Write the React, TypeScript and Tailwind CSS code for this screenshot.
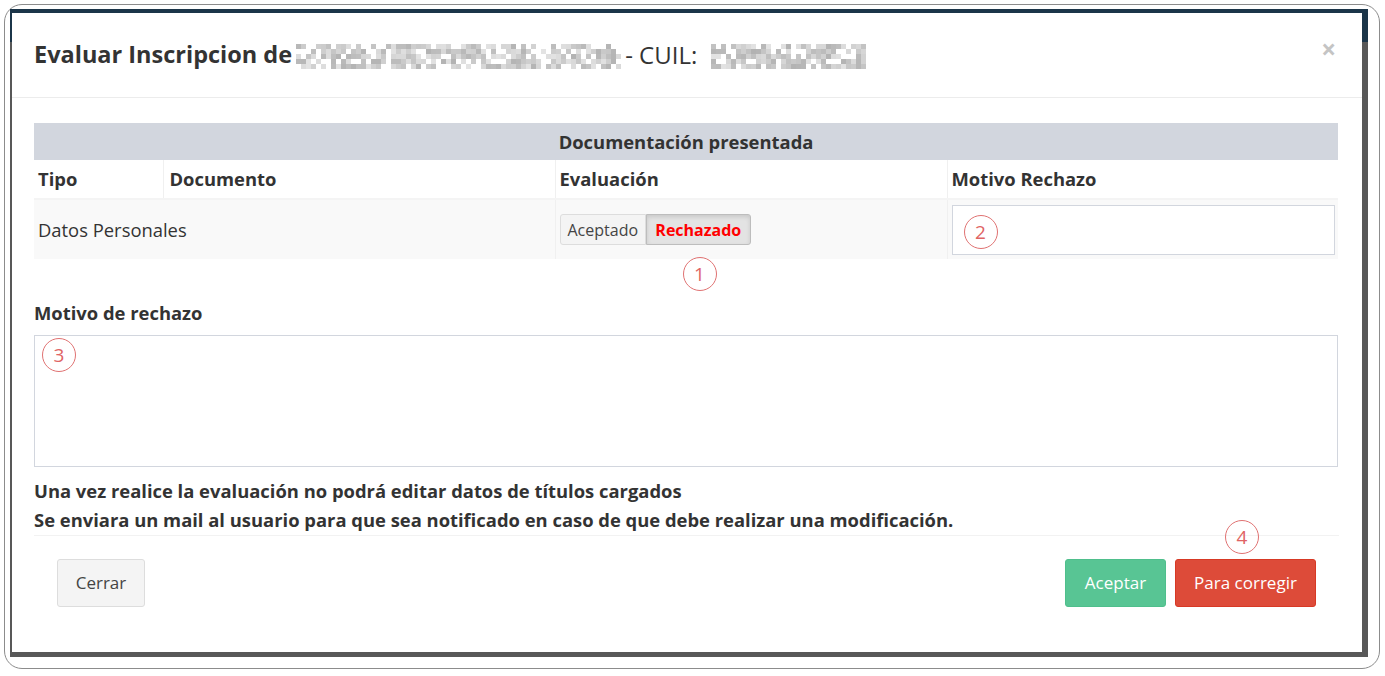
import React from 'react';

// pixelated placeholder used for the censored name / CUIL
const Blur = ({ cols, seed }: { cols: number; seed: number }) => {
  const rows = 7;
  const cell = 5;
  const cells: React.ReactNode[] = [];
  let s = seed;
  const rnd = () => {
    s = (s * 9301 + 49297) % 233280;
    return s / 233280;
  };
  for (let c = 0; c < cols; c++) {
    for (let r = 0; r < rows; r++) {
      const edge = r === 0 || r === rows - 1 ? 0.3 : 1;
      const v = rnd() * edge;
      if (v < 0.3) continue;
      const g = Math.round(248 - v * 70);
      cells.push(
        <rect key={`${c}-${r}`} x={c * cell} y={r * cell} width={cell} height={cell} fill={`rgb(${g},${g},${g})`} />
      );
    }
  }
  return (
    <svg width={cols * cell} height={rows * cell} className="inline-block align-middle">
      {cells}
    </svg>
  );
};

const Mark = ({ n, className }: { n: number; className: string }) => (
  <span
    className={`absolute flex h-[34px] w-[34px] items-center justify-center rounded-full border-[1.5px] border-[#e07272] text-[19px] text-[#e06464] ${className}`}
  >
    {n}
  </span>
);

export default function App() {
  return (
    <div
      className="h-[676px] w-[1385px] bg-white pl-[4px] pt-[4px] text-[#333]"
      style={{ fontFamily: '"Open Sans", Lato, sans-serif' }}
    >
      <div className="flex h-[665px] w-[1376px] flex-col rounded-[18px] border border-[#8c8c8c] pb-[11px] pl-[5px] pr-[11px] pt-[4px]">
        <div className="flex flex-1 flex-col bg-[linear-gradient(to_bottom,#1b3549_0,#1b3549_33px,#585858_33px)] pb-[5px] pl-[2px] pr-[6px] pt-[4px]">
          <div className="flex flex-1 flex-col bg-white">
            {/* header */}
            <div className="flex h-[85px] items-center justify-between border-b border-[#ececec] pl-[22px] pr-[26px]">
              <h4 className="flex items-center text-[23.5px] font-bold">
                Evaluar Inscripcion de
                <span className="ml-[4px]">
                  <Blur cols={65} seed={17} />
                </span>
                <span className="ml-[4px] text-[24px] font-normal">- CUIL:</span>
                <span className="ml-[14px]">
                  <Blur cols={31} seed={91} />
                </span>
              </h4>
              <span className="mb-[12px] text-[26px] font-bold leading-none text-[#c4c4c4]">×</span>
            </div>

            {/* body */}
            <div className="flex flex-col px-[22px] pt-[25px] pr-[24px]">
              <table className="w-full border-collapse text-[18.4px]">
                <thead>
                  <tr>
                    <th colSpan={4} className="h-[37px] bg-[#d2d6de] text-center font-bold">
                      Documentación presentada
                    </th>
                  </tr>
                  <tr className="h-[39px] border-b-2 border-[#f4f4f4] text-left">
                    <th className="w-[129px] border-r border-[#f0f0f0] pl-[4px] font-bold">Tipo</th>
                    <th className="w-[392px] border-r border-[#f0f0f0] pl-[6px] font-bold">Documento</th>
                    <th className="w-[392px] border-r border-[#f0f0f0] pl-[4px] font-bold">Evaluación</th>
                    <th className="pl-[4px] font-bold">Motivo Rechazo</th>
                  </tr>
                </thead>
                <tbody>
                  <tr className="h-[60px] bg-[#f9f9f9]">
                    <td colSpan={2} className="border-r border-[#f0f0f0] pl-[4px]">
                      Datos Personales
                    </td>
                    <td className="relative border-r border-[#f0f0f0] pl-[4px]">
                      <div className="flex h-[31px] w-[191px] text-[16px]">
                        <span className="flex items-center rounded-l-[3px] border border-[#ddd] bg-[#f4f4f4] px-[7px] text-[#444]">
                          Aceptado
                        </span>
                        <span className="flex flex-1 items-center justify-center rounded-r-[3px] border border-[#bdbdbd] bg-[#e3e3e3] font-bold text-[#f00] shadow-[inset_0_2px_4px_rgba(0,0,0,0.12)]">
                          Rechazado
                        </span>
                      </div>
                      <Mark n={1} className="left-[127px] top-[57px]" />
                    </td>
                    <td className="relative pl-[4px] pr-[3px]">
                      <input className="h-[50px] w-full border border-[#d2d6de] bg-white px-[10px] outline-none" />
                      <Mark n={2} className="left-[16px] top-[15px]" />
                    </td>
                  </tr>
                </tbody>
              </table>

              <label className="mt-[42px] text-[18.4px] font-bold leading-[24px]">Motivo de rechazo</label>
              <div className="relative mt-[10px]">
                <textarea className="block h-[132px] w-full resize-none border border-[#d2d6de] bg-white outline-none" />
                <Mark n={3} className="left-[8px] top-[3px]" />
              </div>

              <p className="mt-[9px] text-[18.4px] font-bold leading-[29px]">
                Una vez realice la evaluación no podrá editar datos de títulos cargados
                <br />
                Se enviara un mail al usuario para que sea notificado en caso de que debe realizar una modificación.
              </p>
            </div>

            {/* footer */}
            <div className="relative mx-[22px] mr-[23px] mt-[1px] flex items-center justify-between border-t border-[#f2f2f2] pl-[23px] pr-[23px] pt-[23px] text-[17px]">
              <button className="h-[48px] w-[88px] rounded-[3px] border border-[#ddd] bg-[#f4f4f4] text-[#444]">
                Cerrar
              </button>
              <div className="flex gap-[9px]">
                <button className="h-[48px] w-[101px] rounded-[3px] border border-[#4fbf8c] bg-[#58c594] text-white">
                  Aceptar
                </button>
                <button className="h-[48px] w-[141px] rounded-[3px] border border-[#d73925] bg-[#dd4b39] text-white">
                  Para corregir
                </button>
              </div>
              <Mark n={4} className="right-[80px] top-[-16px]" />
            </div>
          </div>
        </div>
      </div>
    </div>
  );
}
